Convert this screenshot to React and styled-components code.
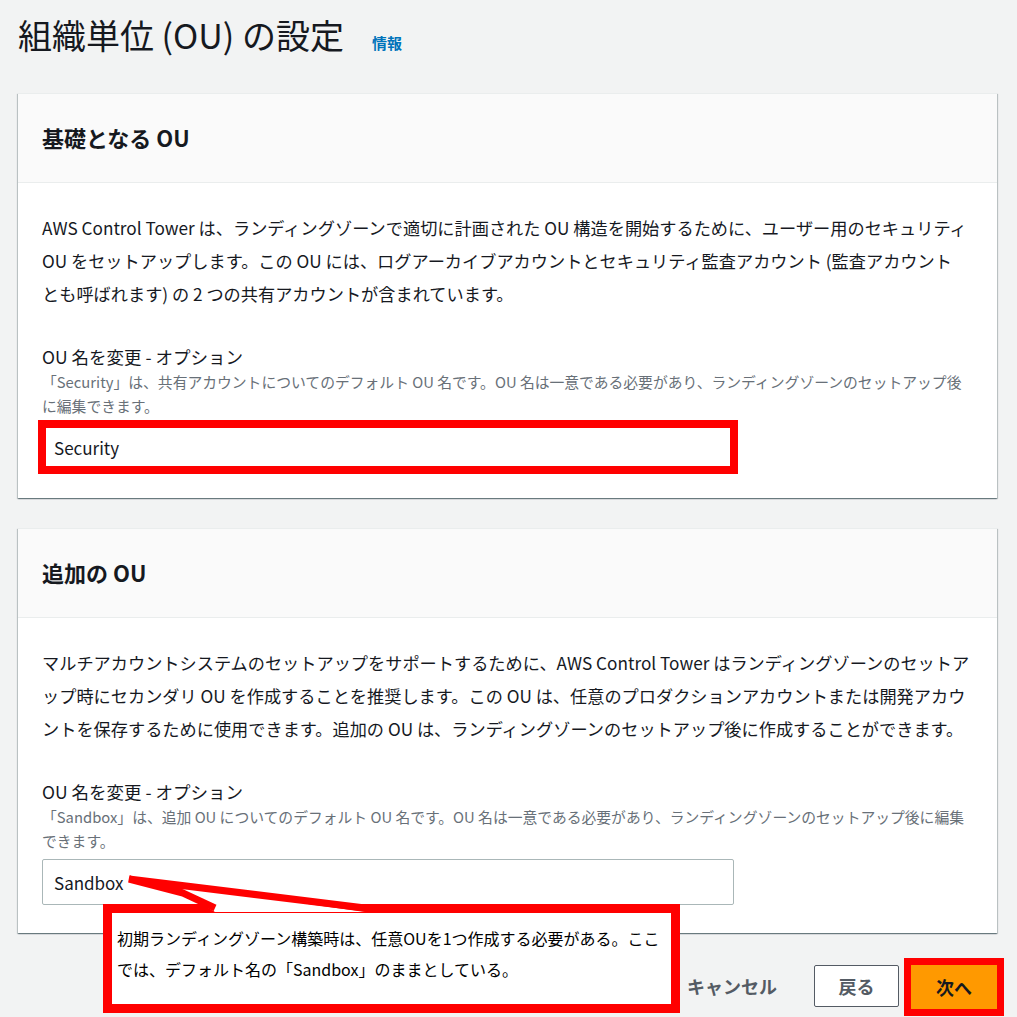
import React from "react"
import styled, { createGlobalStyle } from "styled-components"

const Global = createGlobalStyle`
  body {
    margin: 0;
    background: #f2f3f3;
    font-family: "Noto Sans CJK JP", "Noto Sans", sans-serif;
    color: #16191f;
  }
`

export default function App() {
  return (
    <>
      <Global />
      <Page>
        <TitleRow>
          <Title>組織単位 (OU) の設定</Title>
          <InfoLink>情報</InfoLink>
        </TitleRow>

        <Card>
          <CardHeader>基礎となる OU</CardHeader>
          <CardBody>
            <Paragraph>
              AWS Control Tower は、ランディングゾーンで適切に計画された OU 構造を開始するために、ユーザー用のセキュリティ<br />
              OU をセットアップします。この OU には、ログアーカイブアカウントとセキュリティ監査アカウント (監査アカウント<br />
              とも呼ばれます) の 2 つの共有アカウントが含まれています。
            </Paragraph>
            <Field>
              <Label>OU 名を変更 - オプション</Label>
              <Hint>
                「Security」は、共有アカウントについてのデフォルト OU 名です。OU 名は一意である必要があり、ランディングゾーンのセットアップ後<br />
                に編集できます。
              </Hint>
              <Input $highlight>Security</Input>
            </Field>
          </CardBody>
        </Card>

        <Card>
          <CardHeader>追加の OU</CardHeader>
          <CardBody>
            <Paragraph>
              マルチアカウントシステムのセットアップをサポートするために、AWS Control Tower はランディングゾーンのセットア<br />
              ップ時にセカンダリ OU を作成することを推奨します。この OU は、任意のプロダクションアカウントまたは開発アカウ<br />
              ントを保存するために使用できます。追加の OU は、ランディングゾーンのセットアップ後に作成することができます。
            </Paragraph>
            <Field>
              <Label>OU 名を変更 - オプション</Label>
              <Hint>
                「Sandbox」は、追加 OU についてのデフォルト OU 名です。OU 名は一意である必要があり、ランディングゾーンのセットアップ後に編集<br />
                できます。
              </Hint>
              <Input>Sandbox</Input>
            </Field>
          </CardBody>
        </Card>

        <Footer>
          <TextButton>キャンセル</TextButton>
          <Button>戻る</Button>
          <Button $primary $highlight>次へ</Button>
        </Footer>

        <Callout>
          <Tail width="300" height="40" viewBox="0 -32 300 40">
            <polygon points="26,-25 80,-11 112,8 262,8" fill="#fff" />
            <polyline
              points="112,4 80,-11 26,-25 262,4"
              fill="none"
              stroke="#ff0000"
              strokeWidth="7"
              strokeLinejoin="miter"
            />
          </Tail>
          初期ランディングゾーン構築時は、任意OUを1つ作成する必要がある。ここ<br />
          では、デフォルト名の「Sandbox」のままとしている。
        </Callout>
      </Page>
    </>
  )
}

const Page = styled.div`
  position: relative;
  padding: 0 20px 0 18px;
  height: 1017px;
  box-sizing: border-box;
  overflow: hidden;
`

const TitleRow = styled.div`
  display: flex;
  align-items: baseline;
  gap: 28px;
  padding-top: 11px;
  height: 93px;
  box-sizing: border-box;
`

const Title = styled.h1`
  margin: 0;
  font-size: 34px;
  font-weight: 400;
  line-height: 48px;
  color: #16191f;
`

const InfoLink = styled.a`
  font-size: 15px;
  font-weight: 700;
  color: #0073bb;
`

const Card = styled.section`
  background: #fff;
  border-top: 1px solid #eaeded;
  box-shadow: 0 1px 1px 0 rgba(0, 28, 36, 0.35), 1px 1px 1px 0 rgba(0, 28, 36, 0.18),
    -1px 1px 1px 0 rgba(0, 28, 36, 0.18);
  margin-bottom: 30px;
`

const CardHeader = styled.h2`
  margin: 0;
  height: 89px;
  box-sizing: border-box;
  display: flex;
  align-items: center;
  padding: 0 24px 3px;
  background: #fafafa;
  border-bottom: 1px solid #eaeded;
  font-size: 22px;
  font-weight: 700;
  color: #16191f;
`

const CardBody = styled.div`
  padding: 28px 24px 28px;
  display: flex;
  flex-direction: column;
  gap: 34px;
`

const Paragraph = styled.p`
  margin: 0;
  font-size: 17.2px;
  line-height: 33px;
  white-space: nowrap;
  color: #16191f;
`

const Field = styled.div`
  display: flex;
  flex-direction: column;
`

const Label = styled.div`
  font-size: 17.5px;
  line-height: 26px;
  color: #16191f;
`

const Hint = styled.div`
  font-size: 14.8px;
  line-height: 24px;
  color: #687078;
  white-space: nowrap;
  margin-bottom: 6px;
`

const Input = styled.div`
  width: 692px;
  height: 46px;
  box-sizing: border-box;
  border: 1px solid #aab7b8;
  border-radius: ${(p) => (p.$highlight ? "0" : "2px")};
  padding: 0 11px;
  display: flex;
  align-items: center;
  font-size: 17px;
  color: #16191f;
  background: #fff;
  outline: ${(p) => (p.$highlight ? "8px solid #ff0000" : "none")};
  outline-offset: -4px;
`

const Footer = styled.div`
  display: flex;
  justify-content: flex-end;
  align-items: center;
  gap: 12px;
`

const TextButton = styled.button`
  background: none;
  border: none;
  font-family: inherit;
  font-size: 18px;
  font-weight: 700;
  color: #545b64;
  margin-right: 25px;
  padding: 0;
`

const Button = styled.button`
  width: ${(p) => (p.$primary ? "86px" : "85px")};
  height: ${(p) => (p.$primary ? "44px" : "42px")};
  border-radius: ${(p) => (p.$highlight ? "0" : "2px")};
  border: ${(p) => (p.$primary ? "1px solid #ff9900" : "1px solid #545b64")};
  background: ${(p) => (p.$primary ? "#ff9900" : "#fff")};
  color: ${(p) => (p.$primary ? "#16191f" : "#545b64")};
  font-family: inherit;
  font-size: 18px;
  font-weight: 700;
  outline: ${(p) => (p.$highlight ? "7px solid #ff0000" : "none")};
  margin-top: ${(p) => (p.$primary ? "2px" : "0")};
`

const Callout = styled.div`
  position: absolute;
  left: 103px;
  top: 904px;
  width: 577px;
  height: 109px;
  box-sizing: border-box;
  border: 9px solid #ff0000;
  background: #fff;
  padding: 10px 0 0 5px;
  font-size: 16px;
  line-height: 31px;
  color: #000;
  white-space: nowrap;
`

const Tail = styled.svg`
  position: absolute;
  left: -9px;
  top: -41px;
  overflow: visible;
`
